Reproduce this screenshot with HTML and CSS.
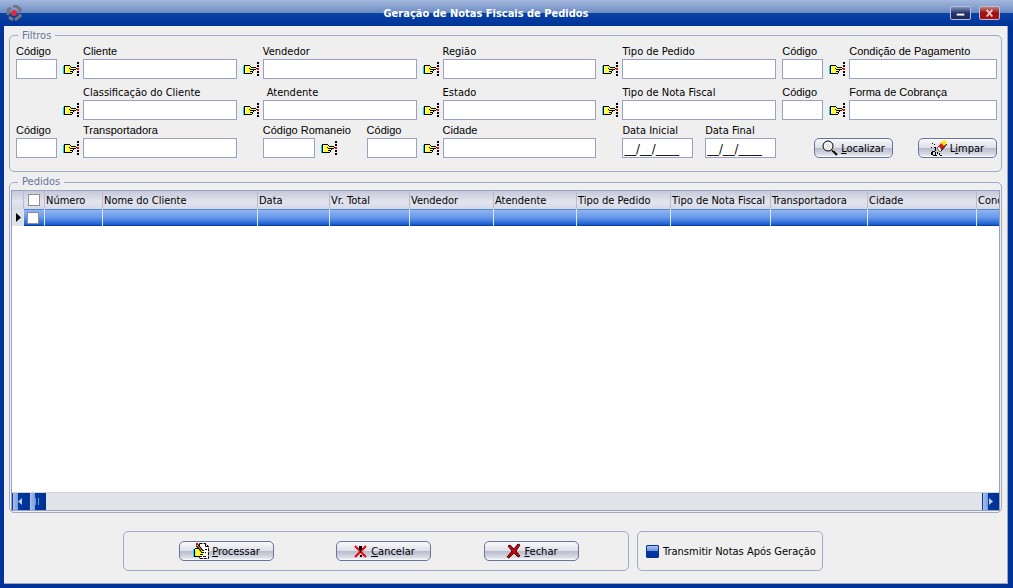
FILE: index.html
```html
<!DOCTYPE html>
<html lang="pt-BR">
<head>
<meta charset="utf-8">
<title>Geração de Notas Fiscais de Pedidos</title>
<link rel="stylesheet" href="styles.css">
</head>
<body>
<svg class="defs" aria-hidden="true">
  <symbol id="hand" viewBox="0 0 16 16">
    <path fill="#00e0e8" d="M0 5h1v8H0z"/>
    <path fill="#fff" d="M2 5h1v7H2z"/>
    <path fill="#ffff30" d="M3 5h5v2h5v1H9v2h1v1H9v1H4v-1H3z"/>
    <path fill="#000" d="M1 4h1v9H1zM2 4h2v1H2zM2 12h2v1H2zM4 4h3v1H4zM7 5h1v1H7zM8 6h5v1H8zM13 7h1v1h-1zM7 8h6v1H7zM6 7h1v1H6zM10 9h1v1h-1zM7 10h3v1H7zM9 11h1v1H9zM4 12h5v1H4z"/>
    <path fill="#000" d="M14 1h2v2h-2zM14 4h2v2h-2zM14 10h2v2h-2zM14 13h2v2h-2z"/>
    <path fill="#f00" d="M14 7h2v2h-2z"/>
  </symbol>
</svg>
<div class="window">
  <header class="titlebar">
    <svg class="logo" viewBox="0 0 16 16" aria-hidden="true">
      <path d="M2 10V5l3-2M7 1l3 0 4 3v3M14 9v2l-5 4M7 15l-4-3" fill="none" stroke="#74747c" stroke-width="3"/>
      <circle cx="8" cy="8" r="3" fill="#e02c3c"/>
    </svg>
    <h1>Geração de Notas Fiscais de Pedidos</h1>
    <button class="win-btn minimize" type="button" aria-label="Minimizar"><svg viewBox="0 0 20 13"><path d="M6 7h8v2H6z" fill="#fff"/></svg></button>
    <button class="win-btn close" type="button" aria-label="Fechar janela"><svg viewBox="0 0 20 13"><path d="M7 3l6 7M13 3l-6 7" stroke="#f4c8c8" stroke-width="2"/></svg></button>
  </header>
  <main>
    <fieldset class="filters">
      <legend>Filtros</legend>
      <div class="filter-grid">
        <div class="field plain"><label class="sys" for="cod1">Código</label><input id="cod1" autofocus></div>
        <div class="field"><label class="sys" for="cliente">Cliente</label><button class="pick" type="button" aria-label="Escolher cliente"><svg><use href="#hand"/></svg></button><input id="cliente"></div>
        <div class="field"><label for="vendedor">Vendedor</label><button class="pick" type="button" aria-label="Escolher vendedor"><svg><use href="#hand"/></svg></button><input id="vendedor"></div>
        <div class="field"><label for="regiao">Região</label><button class="pick" type="button" aria-label="Escolher região"><svg><use href="#hand"/></svg></button><input id="regiao"></div>
        <div class="field"><label for="tipoped">Tipo de Pedido</label><button class="pick" type="button" aria-label="Escolher tipo de pedido"><svg><use href="#hand"/></svg></button><input id="tipoped"></div>
        <div class="field plain"><label class="sys" for="cod2">Código</label><input id="cod2"></div>
        <div class="field"><label class="sys" for="cond">Condição de Pagamento</label><button class="pick" type="button" aria-label="Escolher condição"><svg><use href="#hand"/></svg></button><input id="cond"></div>

        <div class="field second"><label for="classif">Classificação do Cliente</label><button class="pick" type="button" aria-label="Escolher classificação"><svg><use href="#hand"/></svg></button><input id="classif"></div>
        <div class="field"><label class="inset" for="atend">Atendente</label><button class="pick" type="button" aria-label="Escolher atendente"><svg><use href="#hand"/></svg></button><input id="atend"></div>
        <div class="field"><label for="estado">Estado</label><button class="pick" type="button" aria-label="Escolher estado"><svg><use href="#hand"/></svg></button><input id="estado"></div>
        <div class="field"><label for="tiponf">Tipo de Nota Fiscal</label><button class="pick" type="button" aria-label="Escolher tipo de nota"><svg><use href="#hand"/></svg></button><input id="tiponf"></div>
        <div class="field plain"><label class="sys" for="cod3">Código</label><input id="cod3"></div>
        <div class="field"><label class="sys" for="cobr">Forma de Cobrança</label><button class="pick" type="button" aria-label="Escolher forma de cobrança"><svg><use href="#hand"/></svg></button><input id="cobr"></div>

        <div class="field plain"><label class="sys" for="cod4">Código</label><input id="cod4"></div>
        <div class="field"><label class="sys" for="transp">Transportadora</label><button class="pick" type="button" aria-label="Escolher transportadora"><svg><use href="#hand"/></svg></button><input id="transp"></div>
        <div class="split codes">
          <div class="field romaneio"><label class="sys" for="roman">Código Romaneio</label><input id="roman"><button class="pick" type="button" aria-label="Escolher romaneio"><svg><use href="#hand"/></svg></button></div>
          <div class="field plain"><label class="sys" for="cod5">Código</label><input id="cod5"></div>
        </div>
        <div class="field"><label class="sys" for="cidade">Cidade</label><button class="pick" type="button" aria-label="Escolher cidade"><svg><use href="#hand"/></svg></button><input id="cidade"></div>
        <div class="split dates">
          <div class="field plain"><label for="dini">Data Inicial</label><input id="dini" value="__/__/____"></div>
          <div class="field plain"><label for="dfim">Data Final</label><input id="dfim" value="__/__/____"></div>
        </div>
        <div class="actions">
          <button class="btn" type="button"><svg viewBox="0 0 16 16"><circle cx="6" cy="6" r="5" fill="#f2f2f2" stroke="#000"/><path d="M4 4h1v1H4zM6 4h1v1H6zM5 6h1v1H5zM7 6h1v1H7zM4 8h1v1H4zM6 8h1v1H6z" fill="#bbb"/><path d="M10 10l5 5" stroke="#000" stroke-width="2"/><path d="M10 9l2 2" stroke="#cc3"/></svg><span><u>L</u>ocalizar</span></button>
          <button class="btn" type="button"><svg viewBox="0 0 16 16"><path d="M6 8l5-6 4 3-5 6z" fill="#e01818"/><path d="M10 3l3-3 3 2-3 4z" fill="#ffe800"/><path d="M6 8l2-2 3 4-2 2z" fill="#fff" stroke="#400" stroke-width=".6"/><path d="M10 11l6-7" stroke="#000"/><path d="M1 3h1v1H1zM3 4h1v1H3zM0 7h1v1H0zM3 7h2v1H3zM4 8h1v3H4zM1 11h3v1H1zM0 12h2v3H0zM4 12h1v3H4zM2 15h4v1H2zM6 12h1v2H6zM8 13h1v2H8zM9 15h2v1H9z" fill="#000"/></svg><span>L<u>i</u>mpar</span></button>
        </div>
      </div>
    </fieldset>

    <section class="orders" aria-labelledby="orders-title">
      <h2 id="orders-title">Pedidos</h2>
      <div class="grid-box">
        <div class="table-view">
          <table>
            <colgroup><col class="w-mark"><col class="w-check"><col class="w-num"><col class="w-name"><col class="w-date"><col class="w-total"><col class="w-vend"><col class="w-atend"><col class="w-ped"><col class="w-nf"><col class="w-transp"><col class="w-city"><col class="w-cond"></colgroup>
            <thead><tr><th></th><th><input type="checkbox" aria-label="Marcar todos"></th><th>Número</th><th>Nome do Cliente</th><th>Data</th><th>Vr. Total</th><th>Vendedor</th><th>Atendente</th><th>Tipo de Pedido</th><th>Tipo de Nota Fiscal</th><th>Transportadora</th><th>Cidade</th><th>Condição</th></tr></thead>
            <tbody><tr><td class="marker"><svg viewBox="0 0 5 9"><path d="M0 0l5 4.500-5 4.500z"/></svg></td><td><input type="checkbox" aria-label="Marcar pedido"></td><td></td><td></td><td></td><td></td><td></td><td></td><td></td><td></td><td></td><td></td><td></td></tr></tbody>
          </table>
        </div>
        <div class="scrollbar">
          <button type="button" aria-label="Rolar para a esquerda"><svg viewBox="0 0 17 17"><path d="M10 5v7L6 8.500z" fill="#bccdec"/></svg></button>
          <div class="thumb"><svg viewBox="0 0 17 17"><path d="M6 5h1v7H6zM9 5h1v7H9z" fill="#6f93d4"/></svg></div>
          <button class="right" type="button" aria-label="Rolar para a direita"><svg viewBox="0 0 17 17"><path d="M7 5v7l4-3.500z" fill="#bccdec"/></svg></button>
        </div>
      </div>
    </section>

    <footer>
      <div class="panel commands">
        <button class="btn" type="button"><svg viewBox="0 0 16 16"><path d="M6.500.5h6l3 3v12h-9z" fill="#fff" stroke="#000" stroke-dasharray="3 1"/><path d="M12.500.5v3h3M12 6.500h2M12 9.500h1M10 13.500h3" fill="none" stroke="#000"/><path d="M0 6h1v8H0z" fill="#00e0e8"/><path d="M1 6h1v8H1z" fill="#000"/><path d="M3 6h5l3 3v3l-2 1H3z" fill="#ffff20"/><path d="M2 5.500h5l2 2h2M8 9.500h3M7 11.500h3M2 13.500h7" fill="none" stroke="#000"/><path d="M4 2l5 6" stroke="#000" stroke-width="3"/><path d="M4 2l5 6" stroke="#f0c800"/><path d="M3 0h2v2H3z" fill="#d00"/></svg><span><u>P</u>rocessar</span></button>
        <button class="btn" type="button"><svg viewBox="0 0 16 16"><path d="M3 3l11 11M14 3L3 14" stroke="#f00000" stroke-width="2"/><path d="M7 3h3v4H9v3H8V7H7zM8 12h2v2H8z" fill="#000"/></svg><span><u>C</u>ancelar</span></button>
        <button class="btn" type="button"><svg viewBox="0 0 16 16"><path d="M3 3l2-1 4 4 4-5 2 1-4 6 4 5-2 1-4-4-5 5-2-1 5-6z" fill="#b80810" stroke="#600000"/></svg><span><u>F</u>echar</span></button>
      </div>
      <label class="panel transmit"><input type="checkbox"><span>Transmitir Notas Após Geração</span></label>
    </footer>
  </main>
</div>
</body>
</html>
```
FILE: styles.css
```css
* { box-sizing: border-box; }
body {
  margin: 0;
  background: #003399;
  color: #000;
  font: 11px/13px Tahoma, "DejaVu Sans Condensed", "Noto Sans", sans-serif;
}
button, input { font: inherit; color: inherit; margin: 0; padding: 0; }
button { border: 0; background: none; }
svg { display: block; }
.defs { position: absolute; width: 0; height: 0; }
.window { min-height: 100vh; display: flex; flex-direction: column; padding: 0 5px 4px 4px; background: #003399; }
.titlebar {
  display: flex; align-items: center; gap: 8px; height: 26px; padding: 0 13px 0 2px; margin: 0 -5px 0 -4px;
  background: linear-gradient(#a4b8dc 0, #6d8cc4 13px, #0a43a4 13px, #003399 100%);
}
.titlebar h1 { flex: 1; margin: 0; text-align: center; color: #fff; font-size: 11px; font-weight: bold; }
.logo { width: 16px; height: 16px; margin-left: 4px; }
.win-btn { width: 21px; height: 14px; border: 1px solid #b4c0dc; border-radius: 2px; }
.minimize { background: linear-gradient(#8491b5, #26356e 50%, #1c2860); }
.close { background: linear-gradient(#c67a80, #9a1010 50%, #b01010); }
main { flex: 1; display: flex; flex-direction: column; padding: 3px 5px 12px; background: #efefef; border-bottom: 1px solid #a0a6b8; border-right: 1px solid #a0a6b8; }
.filters { min-width: 0; margin: 0; padding: 3px 4px 13px 6px; border: 1px solid #a0a9cb; border-radius: 5px; }
legend { margin-left: 2px; padding: 0 4px; color: #66749c; line-height: 13px; }
.filter-grid {
  display: grid; align-items: start; column-gap: 6px;
  grid-template-columns: 41px repeat(4, minmax(0, 174fr)) 41px minmax(0, 168fr);
  grid-template-rows: 41px 38px auto;
}
.second { grid-column: 2; }
.field { display: grid; grid-template-columns: 16px minmax(0, 1fr); column-gap: 4px; row-gap: 1px; align-items: center; }
.field label { grid-column: 2; white-space: nowrap; }
.field .sys { font-family: "Liberation Sans", Arial, sans-serif; }
.field .inset { padding-left: 4px; }
.field.plain { grid-template-columns: minmax(0, 1fr); }
.field.plain label { grid-column: 1; }
.field input { width: 100%; height: 20px; padding: 0 2px; background: #fff; border: 1px solid #98a1c2; outline: 0; }
.pick, .pick svg { width: 16px; height: 16px; display: block; shape-rendering: crispEdges; }
.split { display: flex; justify-content: space-between; padding-left: 20px; }
.romaneio { grid-template-columns: 52px 16px; column-gap: 6px; }
.romaneio label { grid-column: 1 / 3; }
.codes .plain { width: 50px; }
.dates .plain { width: 71px; }
.dates input { padding: 0 1px; font-size: 13px; }
.actions { grid-column: 6 / 8; align-self: end; display: flex; justify-content: flex-end; gap: 25px; }
.btn {
  display: flex; align-items: center; justify-content: center; gap: 3px; width: 79px; height: 20px;
  border: 1px solid #68759f; border-radius: 5px;
  background: linear-gradient(#fafafc, #dedfe8 48%, #b9bccb 52%, #d8dae4 85%, #fff);
}
.btn svg { width: 16px; height: 16px; }
.btn span { line-height: 13px; }
.orders { flex: 1; display: flex; flex-direction: column; margin-top: 10px; padding: 0 1px 1px; border: 1px solid #a0a9cb; border-radius: 5px; }
.orders h2 { align-self: flex-start; margin: -8px 0 2px 7px; padding: 0 4px; background: #efefef; color: #66749c; font-size: 11px; font-weight: normal; line-height: 13px; }
.grid-box { flex: 1; display: flex; flex-direction: column; min-height: 0; border: 1px solid #98a1c2; background: #fff; }
.table-view { flex: 1; overflow: hidden; }
table { width: 1060px; table-layout: fixed; border-collapse: separate; border-spacing: 0; }
.w-mark { width: 12px; } .w-check { width: 21px; } .w-num { width: 58px; } .w-name { width: 155px; }
.w-date { width: 72px; } .w-total { width: 80px; } .w-vend { width: 84px; } .w-atend { width: 83px; }
.w-ped { width: 94px; } .w-nf { width: 100px; } .w-transp { width: 97px; } .w-city { width: 109px; } .w-cond { width: 95px; }
th {
  height: 18px; padding: 0 0 0 1px; text-align: left; font-weight: normal; white-space: nowrap;
  background: linear-gradient(#c6c9d8, #e2e4ee 60%, #d6d9e5); border-right: 1px solid #b8bccf;
}
td { height: 17px; padding: 0; border-right: 1px solid #dfe7f8; background: linear-gradient(#3468c0, #8eb3f2 8%, #6598ea 50%, #1d5fd4 90%, #003399); }
td.marker { background: #dfe1ea; }
.marker svg { width: 5px; height: 9px; margin-left: 4px; }
th input, td input { display: block; width: 12px; height: 12px; margin-left: 3px; appearance: none; background: #fff; border: 1px solid #8e8e94; }
.scrollbar { display: flex; height: 18px; background: #e2e3e8; border-top: 1px solid #d0d2da; }
.scrollbar button, .thumb { width: 17px; height: 17px; background: linear-gradient(90deg, #0b3d9c 1px, #a9c0e8 1px, #7c9fda 6px, #0038a4 6px, #003090); }
.scrollbar .right { margin-left: auto; }
footer { display: flex; gap: 8px; margin: 18px 0 0 114px; }
.panel { height: 40px; border: 1px solid #a0a9cb; border-radius: 5px; }
.commands { display: grid; grid-template-columns: 157px 148px 95px; align-items: center; padding: 0 49px 0 55px; }
.commands .btn { width: 95px; }
.transmit { display: flex; align-items: center; gap: 4px; padding: 0 6px 0 8px; white-space: nowrap; }
.transmit input { width: 13px; height: 13px; appearance: none; border: 1px solid #003399; border-radius: 1px; background: linear-gradient(#b0c6ec, #668fd5 45%, #0038a8 50%, #003090); }
```
